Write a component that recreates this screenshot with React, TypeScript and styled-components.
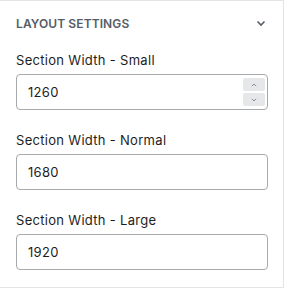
import * as React from 'react';
import styled, { createGlobalStyle } from 'styled-components';

const GlobalStyle = createGlobalStyle`
  body {
    margin: 0;
    background: #ffffff;
    font-family: Inter, "Liberation Sans", sans-serif;
    -webkit-font-smoothing: antialiased;
  }
`;

const fields = [
  { label: 'Section Width - Small', value: '1260', stepper: true },
  { label: 'Section Width - Normal', value: '1680', stepper: false },
  { label: 'Section Width - Large', value: '1920', stepper: false },
];

function Chevron({ size = 10, color = '#555d66' }: { size?: number; color?: string }) {
  return (
    <svg width={size} height={size} viewBox="0 0 10 10" fill="none">
      <path d="M1.5 3.5 L5 7 L8.5 3.5" stroke={color} strokeWidth="1.6" />
    </svg>
  );
}

export default function App() {
  const [values, setValues] = React.useState(fields.map((f) => f.value));

  const step = (index: number, delta: number) =>
    setValues(values.map((v, i) => (i === index ? String(Number(v) + delta) : v)));

  return (
    <>
      <GlobalStyle />
      <Panel>
        <PanelHeader>
          <PanelTitle>Layout Settings</PanelTitle>
          <Chevron />
        </PanelHeader>
        <PanelBody>
          {fields.map((field, i) => (
            <Field key={field.label}>
              <Label>{field.label}</Label>
              <InputBox>
                <NumberInput
                  type="text"
                  value={values[i]}
                  onChange={(e) => setValues(values.map((v, j) => (j === i ? e.target.value : v)))}
                />
                {field.stepper && (
                  <Stepper>
                    <StepButton onClick={() => step(i, 1)}>
                      <svg width="6" height="4" viewBox="0 0 6 4" fill="none">
                        <path d="M0.8 3.2 L3 1 L5.2 3.2" stroke="#8a8f95" strokeWidth="1" />
                      </svg>
                    </StepButton>
                    <StepButton onClick={() => step(i, -1)}>
                      <svg width="6" height="4" viewBox="0 0 6 4" fill="none">
                        <path d="M0.8 0.8 L3 3 L5.2 0.8" stroke="#8a8f95" strokeWidth="1" />
                      </svg>
                    </StepButton>
                  </Stepper>
                )}
              </InputBox>
            </Field>
          ))}
        </PanelBody>
      </Panel>
    </>
  );
}

const Panel = styled.div`
  width: 283px;
  border-top: 1px solid #e2e4e7;
  border-right: 1px solid #e2e4e7;
  border-bottom: 1px solid #e2e4e7;
  background: #ffffff;
`;

const PanelHeader = styled.div`
  display: flex;
  align-items: center;
  justify-content: space-between;
  height: 44px;
  padding: 0 17px 0 16px;
`;

const PanelTitle = styled.h2`
  margin: 0;
  font-size: 12px;
  font-weight: 600;
  text-transform: uppercase;
  color: #555d66;
  letter-spacing: 0.1px;
`;

const PanelBody = styled.div`
  display: flex;
  flex-direction: column;
  gap: 22px;
  padding: 7px 16px 17px;
`;

const Field = styled.div`
  display: flex;
  flex-direction: column;
  gap: 6px;
`;

const Label = styled.label`
  font-size: 13px;
  line-height: 16px;
  letter-spacing: 0.3px;
  color: #1e1e1e;
`;

const InputBox = styled.div`
  display: flex;
  align-items: center;
  box-sizing: border-box;
  width: 252px;
  height: 36px;
  border: 1px solid #a7aaad;
  border-radius: 4px;
  padding: 0 2px 0 11px;
`;

const NumberInput = styled.input`
  flex: 1;
  min-width: 0;
  border: none;
  outline: none;
  padding: 0;
  background: transparent;
  font-family: inherit;
  font-size: 13px;
  letter-spacing: 0.3px;
  color: #1e1e1e;
`;

const Stepper = styled.div`
  display: flex;
  flex-direction: column;
  gap: 2px;
`;

const StepButton = styled.button`
  display: flex;
  align-items: center;
  justify-content: center;
  width: 22px;
  height: 13px;
  padding: 0;
  border: none;
  border-radius: 2px;
  background: #e6e7e9;
  cursor: pointer;
`;
